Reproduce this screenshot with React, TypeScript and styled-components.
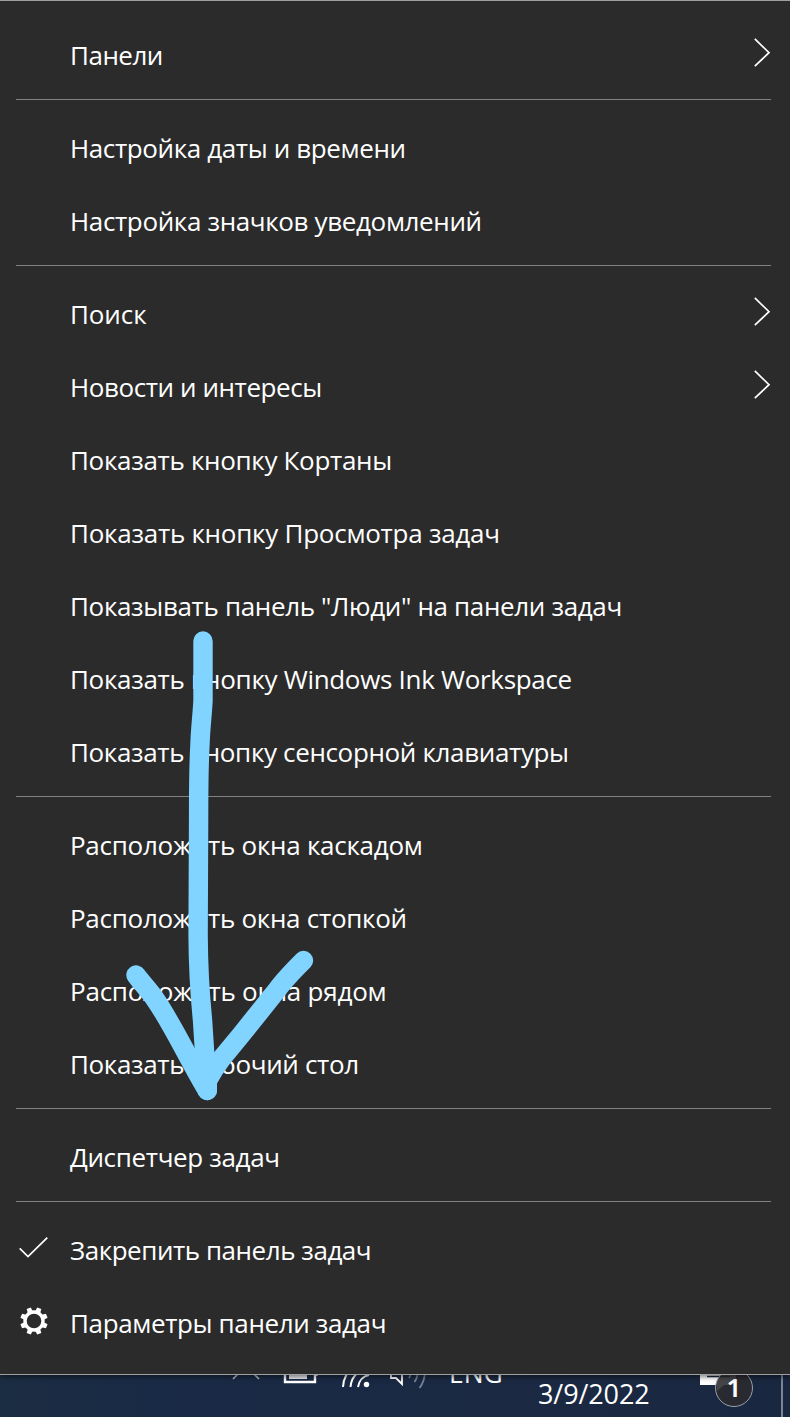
import React from 'react';
import styled, { createGlobalStyle } from 'styled-components';

const GlobalStyle = createGlobalStyle`
  *, *::before, *::after { box-sizing: border-box; }
  body { margin: 0; background: #1a2940; }
`;

const Screen = styled.div`
  position: relative;
  display: flex;
  flex-direction: column;
  width: 790px;
  height: 1417px;
  overflow: hidden;
  font-family: 'Open Sans', 'Noto Sans', sans-serif;
  font-size: 26px;
  color: #fff;
`;

const Menu = styled.nav`
  position: relative;
  z-index: 1;
  flex: none;
  height: 1375px;
  padding-top: 15px;
  border-top: 1px solid #a0a0a0;
  border-bottom: 1px solid #a0a0a0;
  background: #2b2b2b;
  box-shadow: 0 2px 5px rgba(0, 0, 0, 0.5);
`;

const Group = styled.div`
  & + & {
    margin-top: 10px;
  }
  & + &::before {
    content: '';
    display: block;
    height: 1px;
    margin: 0 19px 9px 16px;
    background: #808080;
  }
`;

const Item = styled.div`
  display: grid;
  grid-template-columns: 70px 1fr 36px;
  height: 73px;
`;

const IconSlot = styled.span`
  padding: 18px 0 0 18px;
  svg { display: block; }
`;

const Label = styled.span<{ $tracking: number }>`
  line-height: 79px;
  white-space: nowrap;
  letter-spacing: ${({ $tracking }) => $tracking}px;
`;

const ArrowSlot = styled.span`
  padding-top: 22px;
  svg { display: block; }
`;

const Taskbar = styled.footer`
  display: flex;
  align-items: flex-start;
  flex: 1;
  min-height: 0;
  padding-left: 228px;
  background: linear-gradient(90deg, #1b2d42, #192a46 22%, #1b2942 60%, #1a2740);
`;

const TrayIcons = styled.svg`
  flex: none;
`;

const Language = styled.span`
  width: 90px;
  padding-left: 1px;
  margin-top: -20px;
  line-height: 36px;
  font-size: 26.4px;
`;

const DateText = styled.span`
  width: 162px;
  font-size: 27px;
  line-height: 38px;
  letter-spacing: -0.1px;
`;

const Notifications = styled.div`
  position: relative;
  width: 81px;
  height: 42px;
`;

const NoteIcon = styled.svg`
  display: block;
`;

const Count = styled.span`
  position: absolute;
  left: 15px;
  top: -6px;
  width: 38px;
  height: 38px;
  border: 1.5px solid #9aa0aa;
  border-radius: 50%;
  background: rgba(43, 43, 47, 0.88);
  font-family: 'Noto Sans', sans-serif;
  font-size: 26px;
  font-weight: 600;
  line-height: 34px;
  text-align: center;
`;

const DesktopEdge = styled.span`
  width: 9px;
  height: 42px;
  border-left: 2px solid #7b8495;
`;

const Pointer = styled.svg`
  position: absolute;
  z-index: 2;
  left: 120px;
  top: 625px;
`;

const Check = () => (
  <svg width="34" height="34" viewBox="18 1229 34 34" fill="none" stroke="#fff" strokeWidth="1.7">
    <path d="M19.7 1248.3 28 1256.5 47.3 1237.6" />
  </svg>
);

const Gear = () => (
  <svg width="34" height="34" viewBox="-16 -19 34 34">
    <circle r="9" fill="none" stroke="#fff" strokeWidth="3.4" />
    {[22.5, 67.5, 112.5, 157.5, 202.5, 247.5, 292.5, 337.5].map((a) => (
      <path key={a} d="M-2.7-9.5-2.2-13.8H2.2L2.7-9.5Z" fill="#fff" transform={`rotate(${a})`} />
    ))}
  </svg>
);

const Chevron = () => (
  <svg width="18" height="30" viewBox="0 0 18 30" fill="none" stroke="#fff" strokeWidth="1.7">
    <path d="M.8.9 15 14.7.8 28.2" />
  </svg>
);

type Entry = { text: string; tracking: number; submenu?: boolean; icon?: React.ReactNode };

const groups: Entry[][] = [
  [{ text: 'Панели', tracking: -0.5, submenu: true }],
  [
    { text: 'Настройка даты и времени', tracking: -0.38 },
    { text: 'Настройка значков уведомлений', tracking: -0.36 },
  ],
  [
    { text: 'Поиск', tracking: -0.1, submenu: true },
    { text: 'Новости и интересы', tracking: -0.42, submenu: true },
    { text: 'Показать кнопку Кортаны', tracking: -0.32 },
    { text: 'Показать кнопку Просмотра задач', tracking: -0.26 },
    { text: 'Показывать панель "Люди" на панели задач', tracking: -0.345 },
    { text: 'Показать кнопку Windows Ink Workspace', tracking: -0.31 },
    { text: 'Показать кнопку сенсорной клавиатуры', tracking: -0.35 },
  ],
  [
    { text: 'Расположить окна каскадом', tracking: -0.27 },
    { text: 'Расположить окна стопкой', tracking: -0.28 },
    { text: 'Расположить окна рядом', tracking: -0.23 },
    { text: 'Показать рабочий стол', tracking: -0.35 },
  ],
  [{ text: 'Диспетчер задач', tracking: -0.35 }],
  [
    { text: 'Закрепить панель задач', tracking: -0.46 },
    { text: 'Параметры панели задач', tracking: -0.37 },
  ],
];

groups[5][0].icon = <Check />;
groups[5][1].icon = <Gear />;

export default function App() {
  return (
    <>
      <GlobalStyle />
      <Screen>
        <Menu>
          {groups.map((group, i) => (
            <Group key={i}>
              {group.map((item) => (
                <Item key={item.text}>
                  <IconSlot>{item.icon}</IconSlot>
                  <Label $tracking={item.tracking}>{item.text}</Label>
                  <ArrowSlot>{item.submenu && <Chevron />}</ArrowSlot>
                </Item>
              ))}
            </Group>
          ))}
        </Menu>
        <Taskbar>
          <TrayIcons width="220" height="42" viewBox="228 1375 220 42" fill="none" stroke="#fff">
            <path d="M233 1379 246 1366 259 1379" stroke="#b5bbc4" strokeWidth="1.6" />
            <path d="M285 1370V1382H315V1370" strokeWidth="2.4" />
            <path d="M289 1370H307V1379H289Z" fill="#e8eaee" stroke="none" />
            <path d="M316 1370V1376" strokeWidth="3" />
            <path d="M343 1387C343.500 1380 346 1374 350 1370M350.500 1387C351 1380 355 1374 361 1371M358 1387C359 1381 363 1376 369 1375" strokeWidth="2" />
            <circle cx="366.500" cy="1384.500" r="2.700" fill="#fff" stroke="none" />
            <path d="M391 1370V1378H396L402 1384V1370" strokeWidth="1.8" />
            <path d="M409 1378Q411 1375 411 1370M414.500 1382Q418 1377 418 1370M419.500 1388Q425 1381 425 1370" stroke="#77839a" strokeWidth="1.8" />
          </TrayIcons>
          <Language>ENG</Language>
          <DateText>3/9/2022</DateText>
          <Notifications>
            <NoteIcon width="40" height="42" viewBox="700 1375 40 42">
              <path d="M700 1375H736V1385H724L717 1391V1385H700Z" fill="#fff" />
              <path d="M707 1376.500H730" stroke="#1b2942" strokeWidth="1.500" />
            </NoteIcon>
            <Count>1</Count>
          </Notifications>
          <DesktopEdge />
        </Taskbar>
        <Pointer width="210" height="490" viewBox="120 625 210 490" fill="none" stroke="#80d4ff" strokeWidth="19.4" strokeLinecap="round" strokeLinejoin="round">
          <path d="M203 641V701C202 718 200.500 728 200 744C198.500 770 198.700 790 198.600 820C198.200 860 198 900 198.100 935C198.300 975 200.500 1000 202.500 1020C204 1045 205.500 1065 207.300 1090.500" />
          <path d="M136 975C140 981 149 990 155 999C173 1025 189 1060 207 1090" />
          <path d="M303.500 960.500C292 972 284 980 277 990L241 1035L222 1058C216 1066 211 1074 207.300 1081V1090.500" />
        </Pointer>
      </Screen>
    </>
  );
}
